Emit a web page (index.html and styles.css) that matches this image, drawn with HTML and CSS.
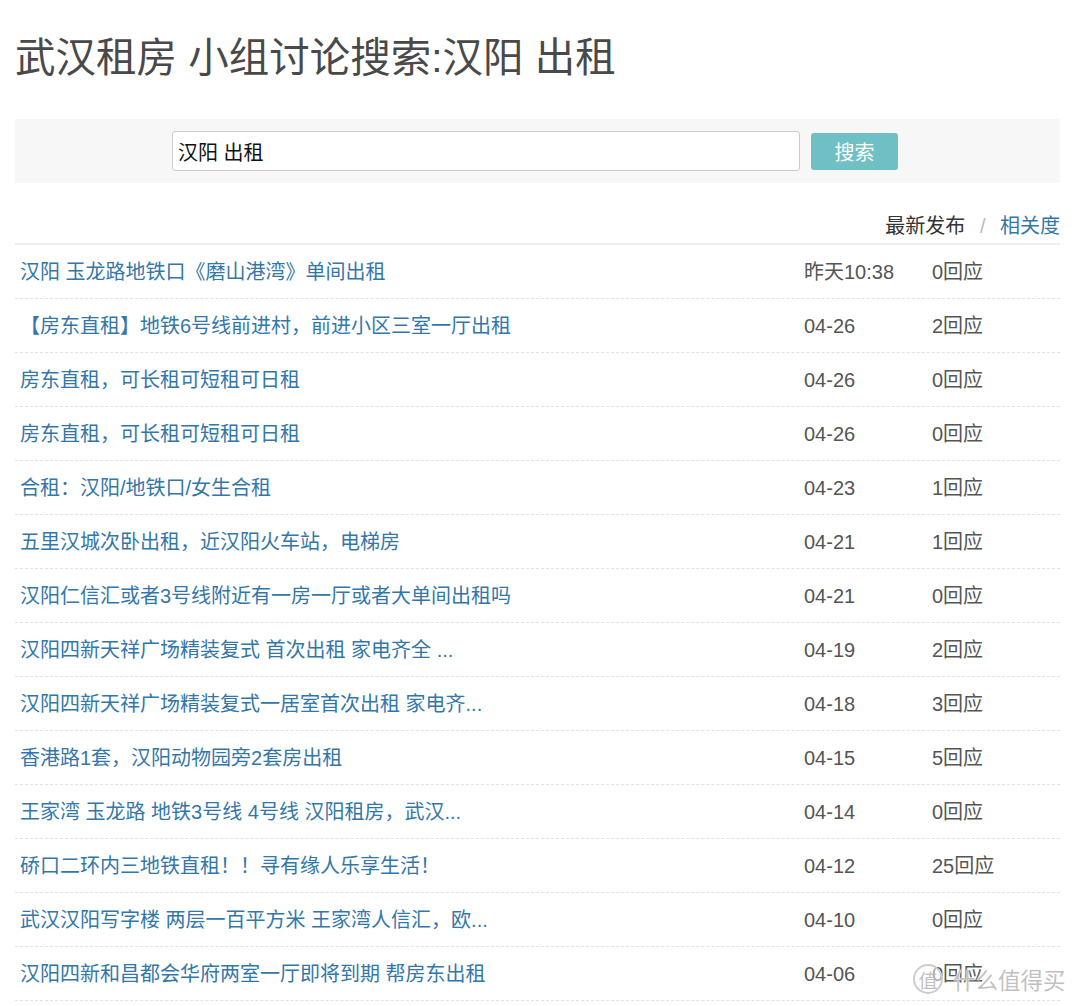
FILE: index.html
```
<!DOCTYPE html>
<html lang="zh-CN">
<head>
<meta charset="utf-8">
<title>武汉租房 小组讨论搜索:汉阳 出租</title>
<link rel="stylesheet" href="styles.css">
</head>
<body>
<div class="page">
  <h1 class="title">武汉租房 小组讨论搜索:汉阳 出租</h1>
  <form class="search">
    <input class="search-input" type="text" value="汉阳 出租">
    <button class="search-btn" type="button">搜索</button>
  </form>
  <div class="sort">
    <span class="sort-current">最新发布</span>
    <span class="sort-sep">/</span>
    <a class="sort-link" href="#">相关度</a>
  </div>
  <div class="list">
    <div class="row"><a class="t" href="#">汉阳 玉龙路地铁口《磨山港湾》单间出租</a><span class="d">昨天10:38</span><span class="r">0回应</span></div>
    <div class="row"><a class="t" href="#">【房东直租】地铁6号线前进村，前进小区三室一厅出租</a><span class="d">04-26</span><span class="r">2回应</span></div>
    <div class="row"><a class="t" href="#">房东直租，可长租可短租可日租</a><span class="d">04-26</span><span class="r">0回应</span></div>
    <div class="row"><a class="t" href="#">房东直租，可长租可短租可日租</a><span class="d">04-26</span><span class="r">0回应</span></div>
    <div class="row"><a class="t" href="#">合租：汉阳/地铁口/女生合租</a><span class="d">04-23</span><span class="r">1回应</span></div>
    <div class="row"><a class="t" href="#">五里汉城次卧出租，近汉阳火车站，电梯房</a><span class="d">04-21</span><span class="r">1回应</span></div>
    <div class="row"><a class="t" href="#">汉阳仁信汇或者3号线附近有一房一厅或者大单间出租吗</a><span class="d">04-21</span><span class="r">0回应</span></div>
    <div class="row"><a class="t" href="#">汉阳四新天祥广场精装复式 首次出租 家电齐全 ...</a><span class="d">04-19</span><span class="r">2回应</span></div>
    <div class="row"><a class="t" href="#">汉阳四新天祥广场精装复式一居室首次出租 家电齐...</a><span class="d">04-18</span><span class="r">3回应</span></div>
    <div class="row"><a class="t" href="#">香港路1套，汉阳动物园旁2套房出租</a><span class="d">04-15</span><span class="r">5回应</span></div>
    <div class="row"><a class="t" href="#">王家湾 玉龙路 地铁3号线 4号线 汉阳租房，武汉...</a><span class="d">04-14</span><span class="r">0回应</span></div>
    <div class="row"><a class="t" href="#">硚口二环内三地铁直租！！寻有缘人乐享生活！</a><span class="d">04-12</span><span class="r">25回应</span></div>
    <div class="row"><a class="t" href="#">武汉汉阳写字楼 两层一百平方米 王家湾人信汇，欧...</a><span class="d">04-10</span><span class="r">0回应</span></div>
    <div class="row"><a class="t" href="#">汉阳四新和昌都会华府两室一厅即将到期 帮房东出租</a><span class="d">04-06</span><span class="r">0回应</span></div>
  </div>
</div>
<div class="watermark">
  <span class="wm-badge">值</span><span class="wm-text">什么值得买</span>
</div>
</body>
</html>
```

FILE: styles.css
```
html, body {
  margin: 0;
  padding: 0;
  background: #fff;
}
body {
  font-family: "Liberation Sans", "Noto Sans CJK SC", sans-serif;
  color: #333;
  overflow: hidden;
}
.page {
  padding: 0 20px 0 15px;
}
.title {
  margin: 36px 0 39px;
  font-size: 40.5px;
  line-height: 44px;
  font-weight: normal;
  color: #494949;
}
.search {
  margin: 0;
  height: 64px;
  background: #f7f7f7;
  display: flex;
  align-items: center;
  padding-left: 157px;
  gap: 11px;
}
.search-input {
  box-sizing: border-box;
  width: 628px;
  height: 40px;
  margin: 0;
  padding: 0 5px;
  border: 1px solid #ccc;
  border-radius: 3px;
  background: #fff;
  font-family: "Liberation Sans", "Noto Sans CJK SC", sans-serif;
  font-size: 20px;
  color: #111;
  outline: none;
}
.search-btn {
  width: 87px;
  height: 37px;
  margin: 0;
  padding: 0;
  border: none;
  border-radius: 3px;
  background: #6fc0c4;
  color: #fff;
  font-family: "Liberation Sans", "Noto Sans CJK SC", sans-serif;
  font-size: 20px;
}
.sort {
  margin-top: 28px;
  padding-bottom: 2px;
  border-bottom: 2px solid #eee;
  text-align: right;
  font-size: 20px;
  line-height: 30px;
}
.sort-current {
  color: #333;
}
.sort-sep {
  color: #bbb;
  margin: 0 9px;
}
.sort-link {
  color: #37a;
  text-decoration: none;
}
.row {
  display: grid;
  grid-template-columns: 1fr 128px 128px;
  align-items: center;
  height: 53px;
  padding-left: 5px;
  border-bottom: 1px dashed #e2e2e2;
  font-size: 20px;
  line-height: 30px;
}
.t {
  color: #37a;
  text-decoration: none;
  white-space: nowrap;
}
.d, .r {
  color: #555;
  white-space: nowrap;
}
.watermark {
  position: absolute;
  left: 913px;
  top: 964px;
  display: flex;
  align-items: center;
  gap: 10px;
  white-space: nowrap;
  color: rgba(185, 185, 185, 0.9);
  font-family: "Noto Sans CJK SC", sans-serif;
  pointer-events: none;
}
.wm-badge {
  box-sizing: border-box;
  width: 30px;
  height: 30px;
  border: 2px solid rgba(200, 200, 200, 0.9);
  border-radius: 50%;
  display: flex;
  align-items: center;
  justify-content: center;
  font-size: 19px;
  line-height: 1;
  background: rgba(255, 255, 255, 0.5);
}
.wm-text {
  font-size: 22.5px;
  line-height: 30px;
  text-shadow: 0 0 2px #fff, 0 0 1px #fff;
}
```
